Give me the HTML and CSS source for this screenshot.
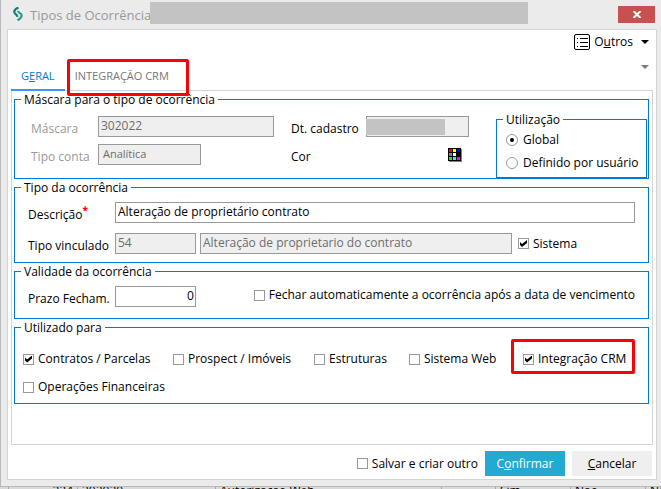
FILE: index.html
```html
<!DOCTYPE html>
<html lang="pt-BR">
<head>
  <meta charset="utf-8">
  <title>Tipos de Ocorrência</title>
  <link rel="stylesheet" href="styles.css">
</head>
<body>
  <div class="dialog">
    <header class="titlebar">
      <svg class="logo" viewBox="0 0 10 14" width="10" height="14" fill="none" stroke-width="2.200">
        <path d="M5.500 0.500C2 2 0.900 3.500 1.400 5.500C1.900 7 4.200 7.500 4.500 9.800" stroke="#12806a"/>
        <path d="M5 3.800C5.200 5.800 8.200 6.200 8.600 8C9 10 7.500 11.500 4.500 13.300" stroke="#2f9c86"/>
      </svg>
      <h1 class="title">Tipos de Ocorrência</h1>
      <span class="masked masked-title"></span>
      <button class="close" aria-label="Fechar">
        <svg viewBox="0 0 8 7" width="8" height="7" stroke="#fff" stroke-width="2"><path d="M0.5 0l7 7M7.5 0l-7 7"/></svg>
      </button>
    </header>

    <main class="panel">
      <div class="toolbar">
        <button class="others">
          <svg viewBox="0 0 16 16" width="16" height="16" fill="none" stroke="#000">
            <rect x="0.5" y="0.5" width="15" height="15" rx="1.5"/>
            <path d="M3 4.5h1M3 8.5h1M3 12.5h1M6 4.5h8M6 8.5h8M6 12.5h8"/>
          </svg>
          <span>O<u>u</u>tros</span>
          <span class="arrow"></span>
        </button>
      </div>

      <nav class="tabs">
        <a class="tab active" href="#geral">G<u>E</u>RAL</a>
        <a class="tab highlight" href="#crm">INTEGRAÇÃO CRM</a>
        <span class="arrow arrow-muted"></span>
      </nav>

      <form class="page" id="geral">
        <fieldset class="group">
          <legend>Máscara para o tipo de ocorrência</legend>
          <div class="mask-layout">
            <div class="mask-fields">
              <label class="label muted" for="mascara">Máscara</label>
              <input class="field" id="mascara" type="text" value="302022" disabled>
              <label class="label" for="cadastro">Dt. cadastro</label>
              <div class="masked-field">
                <input class="field" id="cadastro" type="text" disabled>
                <span class="masked masked-date"></span>
              </div>
              <label class="label muted" for="conta">Tipo conta</label>
              <input class="field field-small" id="conta" type="text" value="Analítica" disabled>
              <label class="label" for="cor">Cor</label>
              <button class="palette" id="cor" type="button" aria-label="Cor">
                <svg viewBox="0 0 14 14" width="14" height="14" shape-rendering="crispEdges">
                  <path fill="#808080" d="M1 1h13v13H1z"/>
                  <path fill="#000" d="M0 0h13v13H0z"/>
                  <path fill="#f00" d="M1 1h3v3H1z"/>
                  <path fill="#ff0" d="M5 1h3v3H5z"/>
                  <path fill="#00f" d="M9 1h3v3H9z"/>
                  <path fill="#808080" d="M1 5h3v3H1z"/>
                  <path fill="#fff" d="M5 5h3v3H5z"/>
                  <path fill="#0f0" d="M1 9h3v3H1z"/>
                  <path fill="#0ff" d="M5 9h3v3H5z"/>
                  <path fill="#f0f" d="M9 9h3v3H9z"/>
                </svg>
              </button>
            </div>
            <fieldset class="group usage">
              <legend>Utilização</legend>
              <label class="choice"><input type="radio" name="uso" checked> Global</label>
              <label class="choice"><input type="radio" name="uso"> Definido por usuário</label>
            </fieldset>
          </div>
        </fieldset>

        <fieldset class="group">
          <legend>Tipo da ocorrência</legend>
          <div class="row">
            <label class="label" for="descricao">Descrição<sup class="required">*</sup></label>
            <input class="field grow" id="descricao" type="text" value="Alteração de proprietário contrato">
          </div>
          <div class="row">
            <label class="label" for="vinculado">Tipo vinculado</label>
            <input class="field field-code" id="vinculado" type="text" value="54" disabled>
            <input class="field grow" type="text" aria-label="Nome do tipo vinculado" value="Alteração de proprietario do contrato" disabled>
            <label class="check check-system"><input type="checkbox" checked> Sistema</label>
          </div>
        </fieldset>

        <fieldset class="group">
          <legend>Validade da ocorrência</legend>
          <div class="row row-deadline">
            <label class="label" for="prazo">Prazo Fecham.</label>
            <input class="field field-code number" id="prazo" type="text" value="0">
            <label class="check check-auto"><input type="checkbox"> Fechar automaticamente a ocorrência após a data de vencimento</label>
          </div>
        </fieldset>

        <fieldset class="group">
          <legend>Utilizado para</legend>
          <div class="targets">
            <label class="check"><input type="checkbox" checked> Contratos / Parcelas</label>
            <label class="check"><input type="checkbox"> Prospect / Imóveis</label>
            <label class="check"><input type="checkbox"> Estruturas</label>
            <label class="check"><input type="checkbox"> Sistema Web</label>
            <label class="check highlight"><input type="checkbox" checked> Integração CRM</label>
            <label class="check check-wide"><input type="checkbox"> Operações Financeiras</label>
          </div>
        </fieldset>
      </form>

      <footer class="actions">
        <label class="check"><input type="checkbox"> Salvar e criar outro</label>
        <button class="btn btn-primary">C<u>o</u>nfirmar</button>
        <button class="btn"><u>C</u>ancelar</button>
      </footer>
    </main>
  </div>

  <div class="behind">
    <table class="records">
      <tr>
        <td class="col-mark"></td>
        <td class="col-id">224</td>
        <td class="col-code">302020</td>
        <td>Autorização Web</td>
        <td class="col-flag"></td>
        <td class="col-bool">Sim</td>
        <td class="col-bool">Não</td>
        <td class="col-last">N</td>
      </tr>
    </table>
  </div>
</body>
</html>
```
FILE: styles.css
```css
* {
  box-sizing: border-box;
}

body {
  margin: 0;
  height: 100vh;
  overflow: hidden;
  display: flex;
  flex-direction: column;
  font-family: "Open Sans", "Noto Sans", sans-serif;
  font-size: 12px;
  line-height: 18px;
  color: #000;
  background-color: #d9d9d9;
}

button,
input {
  font: inherit;
  color: inherit;
}

button {
  padding: 0;
  border: none;
  background: none;
}

.dialog {
  flex: 1;
  display: flex;
  flex-direction: column;
  padding: 0 4px 6px 6px;
  border: solid #b9b9b9;
  border-width: 0 0 1px 1px;
  background-color: #ebebeb;
}

/* Title bar */
.titlebar {
  display: flex;
  align-items: center;
  height: 29px;
  padding: 0 2px 0 6px;
}

.logo {
  margin-bottom: 2px;
}

.title {
  margin: 0 0 0 7px;
  width: 120px;
  font-size: 13px;
  font-weight: normal;
  white-space: nowrap;
  color: #999;
}

.masked {
  background-color: #c3c3c3;
}

.masked-title {
  flex: 1;
  height: 22px;
  margin-bottom: 3px;
}

.close {
  display: flex;
  align-items: center;
  justify-content: center;
  width: 37px;
  height: 17px;
  margin-left: 90px;
  background-color: #c75050;
}

.panel {
  flex: 1;
  padding: 0 3px;
  border: 1px solid #d5d5d5;
  background-color: #fff;
}

.toolbar {
  display: flex;
  justify-content: flex-end;
  height: 29px;
  padding: 3px 4px 0;
}

.others {
  display: flex;
  align-items: center;
  gap: 4px;
  height: 18px;
}

.arrow {
  margin-left: 4px;
  border: solid transparent;
  border-width: 4px 4px 0;
  border-top-color: #000;
}

.arrow-muted {
  margin: 6px 4px 0 auto;
  border-top-color: #7a7a7a;
}

/* Tabs */
.tabs {
  display: flex;
  align-items: flex-start;
  height: 31px;
}

.tab {
  height: 32px;
  padding: 8px 10px;
  font-size: 11px;
  color: #777;
  text-decoration: none;
}

.tab.active {
  position: relative;
  border-bottom: 2px solid #3399ff;
  color: #0078d7;
}

.highlight {
  position: relative;
}

.highlight::after {
  content: "";
  position: absolute;
  inset: -11px -9px -6px -12px;
  border: 3px solid #f00;
  border-radius: 2px;
  pointer-events: none;
}

.tab.highlight::after {
  inset: 0 -10px -5px 2px;
}

.page {
  padding: 0 3px 40px 2px;
  border: 1px solid #d5d5d5;
}

/* Group boxes */
.group {
  min-width: 0;
  margin: 0;
  padding: 0 0 7px;
  border: 1px solid #0078d7;
}

.group legend {
  margin-left: 6px;
  padding: 0 3px;
  line-height: 17px;
}

.mask-layout {
  display: flex;
  margin-bottom: -7px;
}

.mask-fields {
  flex: 1;
  display: grid;
  grid-template-columns: 67px 193px 75px 103px;
  grid-auto-rows: 22px;
  row-gap: 6px;
  padding: 8px 0 12px 16px;
}

.mask-fields .field {
  width: 176px;
}

.mask-fields .field-small {
  width: 103px;
  padding-left: 4px;
  font-size: 11px;
}

.masked-field {
  position: relative;
}

.mask-fields .masked-field .field {
  width: 100%;
}

.masked-date {
  position: absolute;
  inset: 3px 24px 3px 0;
}

.palette {
  justify-self: end;
  width: 14px;
  height: 14px;
  margin: 4px 7px 0 0;
}

.palette svg {
  display: block;
}

.usage {
  width: 151px;
  margin: 3px 1px 0 0;
  padding: 0 0 3px 9px;
}

.usage legend {
  margin-left: -3px;
}

.label {
  height: 21px;
  padding-top: 4px;
  white-space: nowrap;
}

.muted {
  color: #999;
}

.field {
  height: 21px;
  min-width: 0;
  padding: 0 1px 2px 2px;
  border: 1px solid #999;
  border-radius: 0;
  background-color: #fff;
}

.field:disabled {
  background-color: #efefef;
  color: #6d6d6d;
}

.grow {
  flex: 1;
}

.row {
  display: flex;
  padding: 6px 13px 4px;
}

.row .label {
  width: 87px;
}

.row + .row {
  padding-bottom: 1px;
}

.field-code {
  width: 81px;
  margin-right: 4px;
}

.number {
  text-align: right;
}

.required {
  line-height: 0;
  font-size: 10px;
  font-weight: bold;
  color: #f00;
}

.check,
.choice {
  display: flex;
  align-items: center;
  gap: 4px;
  white-space: nowrap;
}

.choice {
  gap: 5px;
  height: 23px;
}

.check-system {
  width: 123px;
  padding-left: 6px;
}

.check-auto {
  margin: 0 0 3px 54px;
}

input[type="checkbox"],
input[type="radio"] {
  appearance: none;
  flex: none;
  display: grid;
  place-items: center;
  width: 11px;
  height: 11px;
  margin: 0;
  border: 1px solid #999;
  background-color: #fff;
}

input[type="radio"] {
  width: 12px;
  height: 12px;
  border-radius: 50%;
}

input[type="checkbox"]:checked::before {
  content: "";
  width: 7px;
  height: 7px;
  background-color: #000;
  clip-path: polygon(0 29%, 29% 57%, 100% 0, 100% 43%, 29% 100%, 0 71%);
}

input[type="radio"]:checked::before {
  content: "";
  width: 4px;
  height: 4px;
  border-radius: 50%;
  background-color: #000;
}

.targets {
  display: grid;
  grid-template-columns: 150px 141px 95px 114px auto;
  justify-content: start;
  row-gap: 10px;
  padding: 14px 8px 0;
}

.check-wide {
  grid-column: span 2;
}

.actions {
  display: flex;
  justify-content: flex-end;
  align-items: center;
  gap: 7px;
  padding: 6px 1px 0 0;
}

.btn {
  width: 80px;
  height: 25px;
  background-color: #efefef;
}

.btn-primary {
  background-color: #23a9d2;
  color: #fff;
}

/* Record list under the dialog */
.behind {
  height: 2px;
  overflow: hidden;
}

.records {
  width: 100%;
  margin-top: -5px;
  border-collapse: collapse;
  table-layout: fixed;
}

.records td {
  padding: 0 4px;
  border-right: 1px solid #a6a6a6;
}

.col-mark {
  width: 7px;
}

.col-id {
  width: 69px;
  text-align: right;
}

.col-code {
  width: 138px;
}

.col-flag {
  width: 54px;
}

.col-bool {
  width: 75px;
}

.col-last {
  width: 15px;
}
```
